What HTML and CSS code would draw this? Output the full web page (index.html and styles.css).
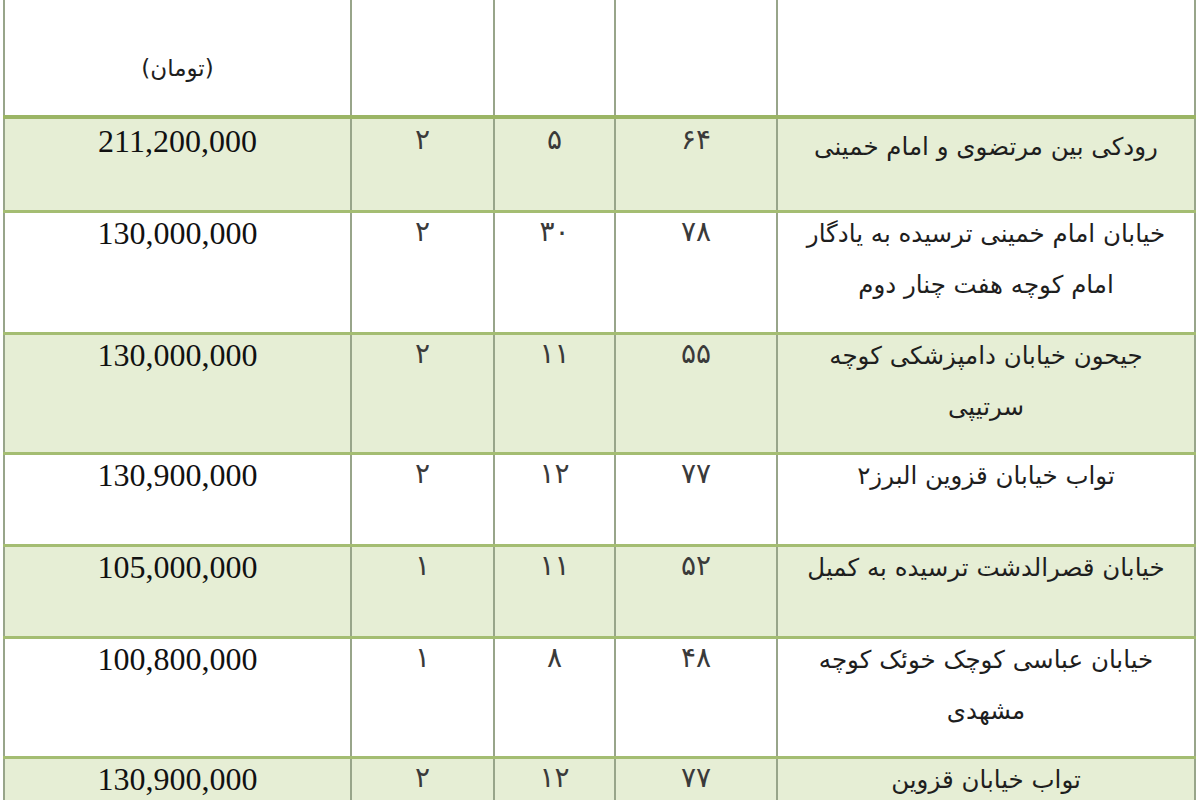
FILE: index.html
```html
<!DOCTYPE html>
<html lang="fa">
<head>
<meta charset="utf-8">
<title>جدول قیمت</title>
<link rel="stylesheet" href="styles.css">
</head>
<body>
<table class="grid" dir="rtl">
  <colgroup>
    <col class="c-addr"><col class="c-area"><col class="c-age"><col class="c-rooms"><col class="c-price">
  </colgroup>
  <thead>
    <tr class="head">
      <th><div class="fa">آدرس ملک</div></th>
      <th><div class="fa">متراژ</div></th>
      <th><div class="fa">عمر بنا</div></th>
      <th><div class="fa">تعداد خواب</div></th>
      <th><div class="fa">قیمت کل واحد</div><div class="unit">(تومان)</div></th>
    </tr>
  </thead>
  <tbody>
    <tr class="band one first">
      <td><div class="fa">رودکی بین مرتضوی و امام خمینی</div></td>
      <td><div class="fa num">۶۴</div></td><td><div class="fa num">۵</div></td><td><div class="fa num">۲</div></td>
      <td><div class="price">211,200,000</div></td>
    </tr>
    <tr class="two tall">
      <td><div class="fa">خیابان امام خمینی ترسیده به یادگار<br>امام کوچه هفت چنار دوم</div></td>
      <td><div class="fa num">۷۸</div></td><td><div class="fa num">۳۰</div></td><td><div class="fa num">۲</div></td>
      <td><div class="price">130,000,000</div></td>
    </tr>
    <tr class="band two">
      <td><div class="fa">جیحون خیابان دامپزشکی کوچه<br>سرتیپی</div></td>
      <td><div class="fa num">۵۵</div></td><td><div class="fa num">۱۱</div></td><td><div class="fa num">۲</div></td>
      <td><div class="price">130,000,000</div></td>
    </tr>
    <tr class="one">
      <td><div class="fa">تواب خیابان قزوین البرز۲</div></td>
      <td><div class="fa num">۷۷</div></td><td><div class="fa num">۱۲</div></td><td><div class="fa num">۲</div></td>
      <td><div class="price">130,900,000</div></td>
    </tr>
    <tr class="band one">
      <td><div class="fa">خیابان قصرالدشت ترسیده به کمیل</div></td>
      <td><div class="fa num">۵۲</div></td><td><div class="fa num">۱۱</div></td><td><div class="fa num">۱</div></td>
      <td><div class="price">105,000,000</div></td>
    </tr>
    <tr class="two">
      <td><div class="fa">خیابان عباسی کوچک خوئک کوچه<br>مشهدی</div></td>
      <td><div class="fa num">۴۸</div></td><td><div class="fa num">۸</div></td><td><div class="fa num">۱</div></td>
      <td><div class="price">100,800,000</div></td>
    </tr>
    <tr class="band one">
      <td><div class="fa">تواب خیابان قزوین</div></td>
      <td><div class="fa num">۷۷</div></td><td><div class="fa num">۱۲</div></td><td><div class="fa num">۲</div></td>
      <td><div class="price">130,900,000</div></td>
    </tr>
  </tbody>
</table>
</body>
</html>
```

FILE: styles.css
```css
html, body {
  margin: 0;
  padding: 0;
  background: #ffffff;
  overflow: hidden;
}

.grid {
  border-collapse: collapse;
  table-layout: fixed;
  width: 1191px;
  margin: -40px 0 0 3px;
  color: #1a1a1a;
}

.c-addr { width: 418px; }
.c-area { width: 162px; }
.c-age { width: 121px; }
.c-rooms { width: 143px; }
.c-price { width: 347px; }

.grid th,
.grid td {
  border-left: 2px solid #98a58a;
  border-right: 2px solid #98a58a;
  border-top: 3px solid #a4bd72;
  border-bottom: 3px solid #a4bd72;
  padding: 0 2px;
  vertical-align: top;
  text-align: center;
  font-weight: normal;
}

.head {
  height: 155px;
}

.head th {
  border-bottom: 4px solid #9bb565;
  background: #ffffff;
}

.fa {
  font-family: "DejaVu Sans", "Noto Sans", sans-serif;
  font-size: 24.5px;
  line-height: 51px;
  margin-top: -5px;
  color: #1e1e1e;
}

.head .fa {
  color: #9a9a9a;
  margin-top: -9px;
}

.unit {
  font-family: "DejaVu Sans", "Noto Sans", sans-serif;
  font-size: 23px;
  line-height: 50px;
  margin-top: 38px;
  color: #1e1e1e;
}

.num {
  font-size: 28px;
  margin-top: -7px;
  color: #3a3a3a;
}

.price {
  font-family: "Liberation Serif", "Times New Roman", serif;
  font-size: 32px;
  line-height: 30px;
  margin-top: 5px;
  color: #111111;
}

.band td {
  background: #e6eed5;
}

.one { height: 92px; }
.two { height: 120px; }
.first { height: 95px; }
.first .fa { margin-top: 2px; }
.first .num { margin-top: -5px; }
.first .price { margin-top: 7px; }
.tall { height: 122px; }
```
